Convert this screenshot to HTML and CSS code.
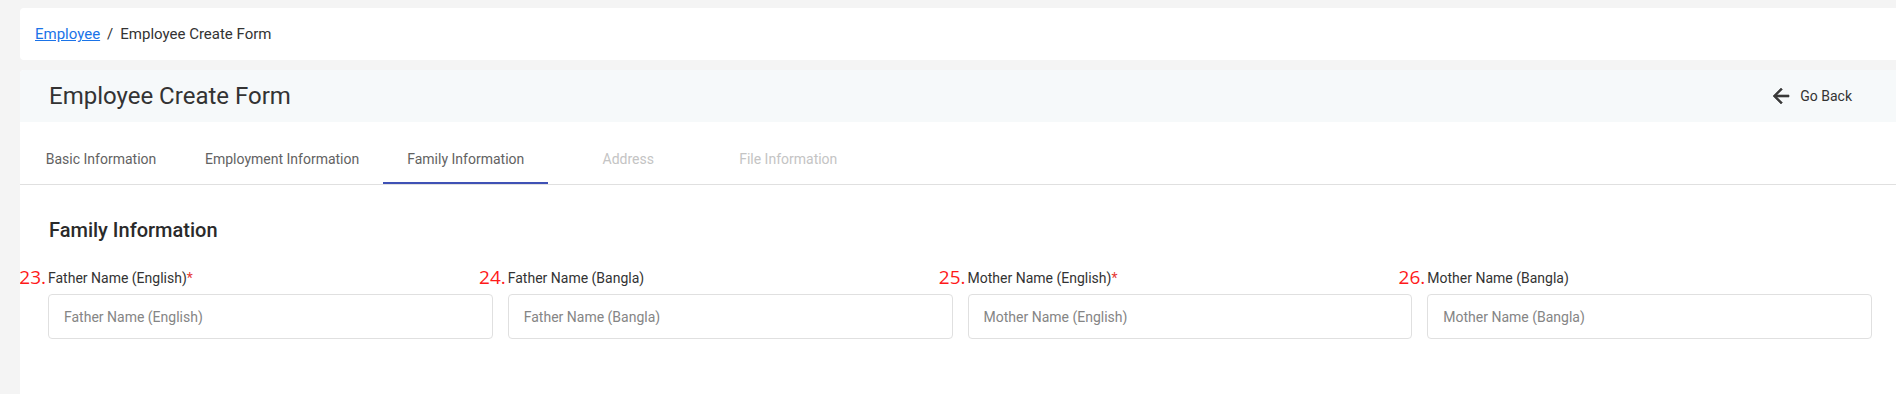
FILE: index.html
```html
<!DOCTYPE html>
<html lang="en">
<head>
  <meta charset="UTF-8" />
  <meta name="viewport" content="width=device-width, initial-scale=1.0" />
  <title>Employee Create Form</title>
  <link rel="stylesheet" href="styles.css">
</head>
<body>
  <div class="page">
    <!-- Breadcrumb -->
    <nav class="card breadcrumb">
      <a href="#">Employee</a>
      <span class="sep">/</span>
      <span>Employee Create Form</span>
    </nav>

    <section class="card main">
      <header class="main-head">
        <h1>Employee Create Form</h1>
        <button class="back" type="button">
          <svg viewBox="0 0 24 24" width="24" height="24" aria-hidden="true">
            <path d="M20 11H7.83l5.59-5.59L12 4l-8 8 8 8 1.41-1.41L7.83 13H20v-2z" />
          </svg>
          Go Back
        </button>
      </header>

      <!-- Tabs -->
      <div class="tabs">
        <button class="tab" type="button">Basic Information</button>
        <button class="tab" type="button">Employment Information</button>
        <button class="tab active" type="button">Family Information</button>
        <button class="tab" type="button" disabled>Address</button>
        <button class="tab" type="button" disabled>File Information</button>
      </div>

      <div class="panel">
        <h2>Family Information</h2>
        <div class="fields">
          <div class="field">
            <label><span class="num">23.</span>Father Name (English)<span class="req">*</span></label>
            <input type="text" placeholder="Father Name (English)" />
          </div>
          <div class="field">
            <label><span class="num">24.</span>Father Name (Bangla)</label>
            <input type="text" placeholder="Father Name (Bangla)" />
          </div>
          <div class="field">
            <label><span class="num">25.</span>Mother Name (English)<span class="req">*</span></label>
            <input type="text" placeholder="Mother Name (English)" />
          </div>
          <div class="field">
            <label><span class="num">26.</span>Mother Name (Bangla)</label>
            <input type="text" placeholder="Mother Name (Bangla)" />
          </div>
        </div>
      </div>
    </section>
  </div>
</body>
</html>
```

FILE: styles.css
```css
:root {
  --page-bg: #f4f4f4;
  --card-bg: #ffffff;
  --head-bg: #f6f9fa;
  --text-dark: #333333;
  --text-mid: #626262;
  --text-muted: #c4c4c4;
  --link: #1a73e8;
  --indigo: #3f51b5;
  --border: #e0e0e0;
  --red: #ff1a1a;
}

* {
  box-sizing: border-box;
}

body {
  margin: 0;
  background: var(--page-bg);
  font-family: Roboto, 'Liberation Sans', sans-serif;
  color: var(--text-dark);
  overflow: hidden;
}

.page {
  width: 1900px;
  padding: 8px 0 0 20px;
  display: flex;
  flex-direction: column;
  gap: 10px;
}

.card {
  background: var(--card-bg);
  border-radius: 4px;
}

/* Breadcrumb */
.breadcrumb {
  height: 52px;
  display: flex;
  align-items: center;
  padding: 0 15px;
  font-size: 15px;
}

.breadcrumb a {
  color: var(--link);
  text-decoration: underline;
}

.breadcrumb .sep {
  margin: 0 7px;
}

/* Main card */
.main {
  min-height: 330px;
  overflow: hidden;
}

.main-head {
  height: 52px;
  background: var(--head-bg);
  display: flex;
  align-items: center;
  justify-content: space-between;
  padding: 0 28px 0 29px;
}

.main-head h1 {
  margin: 0;
  font-size: 24px;
  font-weight: 400;
  color: var(--text-dark);
}

.back {
  display: flex;
  align-items: center;
  gap: 7px;
  background: none;
  border: none;
  padding: 6px 20px 6px 0;
  font-family: inherit;
  font-size: 14px;
  color: var(--text-dark);
  cursor: pointer;
}

.back svg {
  fill: #3a3a3a;
  stroke: #3a3a3a;
  stroke-width: 0.6;
}

/* Tabs */
.tabs {
  display: flex;
  margin-top: 14px;
  padding-left: 1px;
  border-bottom: 1px solid var(--border);
}

.tab {
  min-width: 160px;
  height: 48px;
  padding: 0 24px;
  background: none;
  border: none;
  border-bottom: 2px solid transparent;
  font-family: inherit;
  font-size: 14px;
  color: var(--text-mid);
  cursor: pointer;
}

.tab.active {
  border-bottom-color: var(--indigo);
}

.tab:disabled {
  color: var(--text-muted);
  cursor: default;
}

/* Form panel */
.panel {
  padding: 33px 28px 40px;
}

.panel h2 {
  margin: 0 0 26px 1px;
  font-size: 20px;
  font-weight: 500;
  line-height: 24px;
  color: #2a2a2a;
}

.fields {
  display: grid;
  grid-template-columns: repeat(4, 1fr);
  gap: 15px;
}

.field {
  display: flex;
  flex-direction: column;
  gap: 6px;
}

.field label {
  position: relative;
  font-size: 14px;
  line-height: 20px;
  color: var(--text-dark);
}

.field .num {
  position: absolute;
  right: 100%;
  bottom: -1px;
  margin-right: 2px;
  font-family: 'Open Sans', 'Noto Sans', sans-serif;
  font-size: 19px;
  line-height: 24px;
  color: var(--red);
}

.field .req {
  color: #e53935;
}

.field input {
  height: 45px;
  padding: 0 15px;
  border: 1px solid var(--border);
  border-radius: 4px;
  font-family: inherit;
  font-size: 14px;
  color: var(--text-dark);
}

.field input::placeholder {
  color: #858585;
}
```
